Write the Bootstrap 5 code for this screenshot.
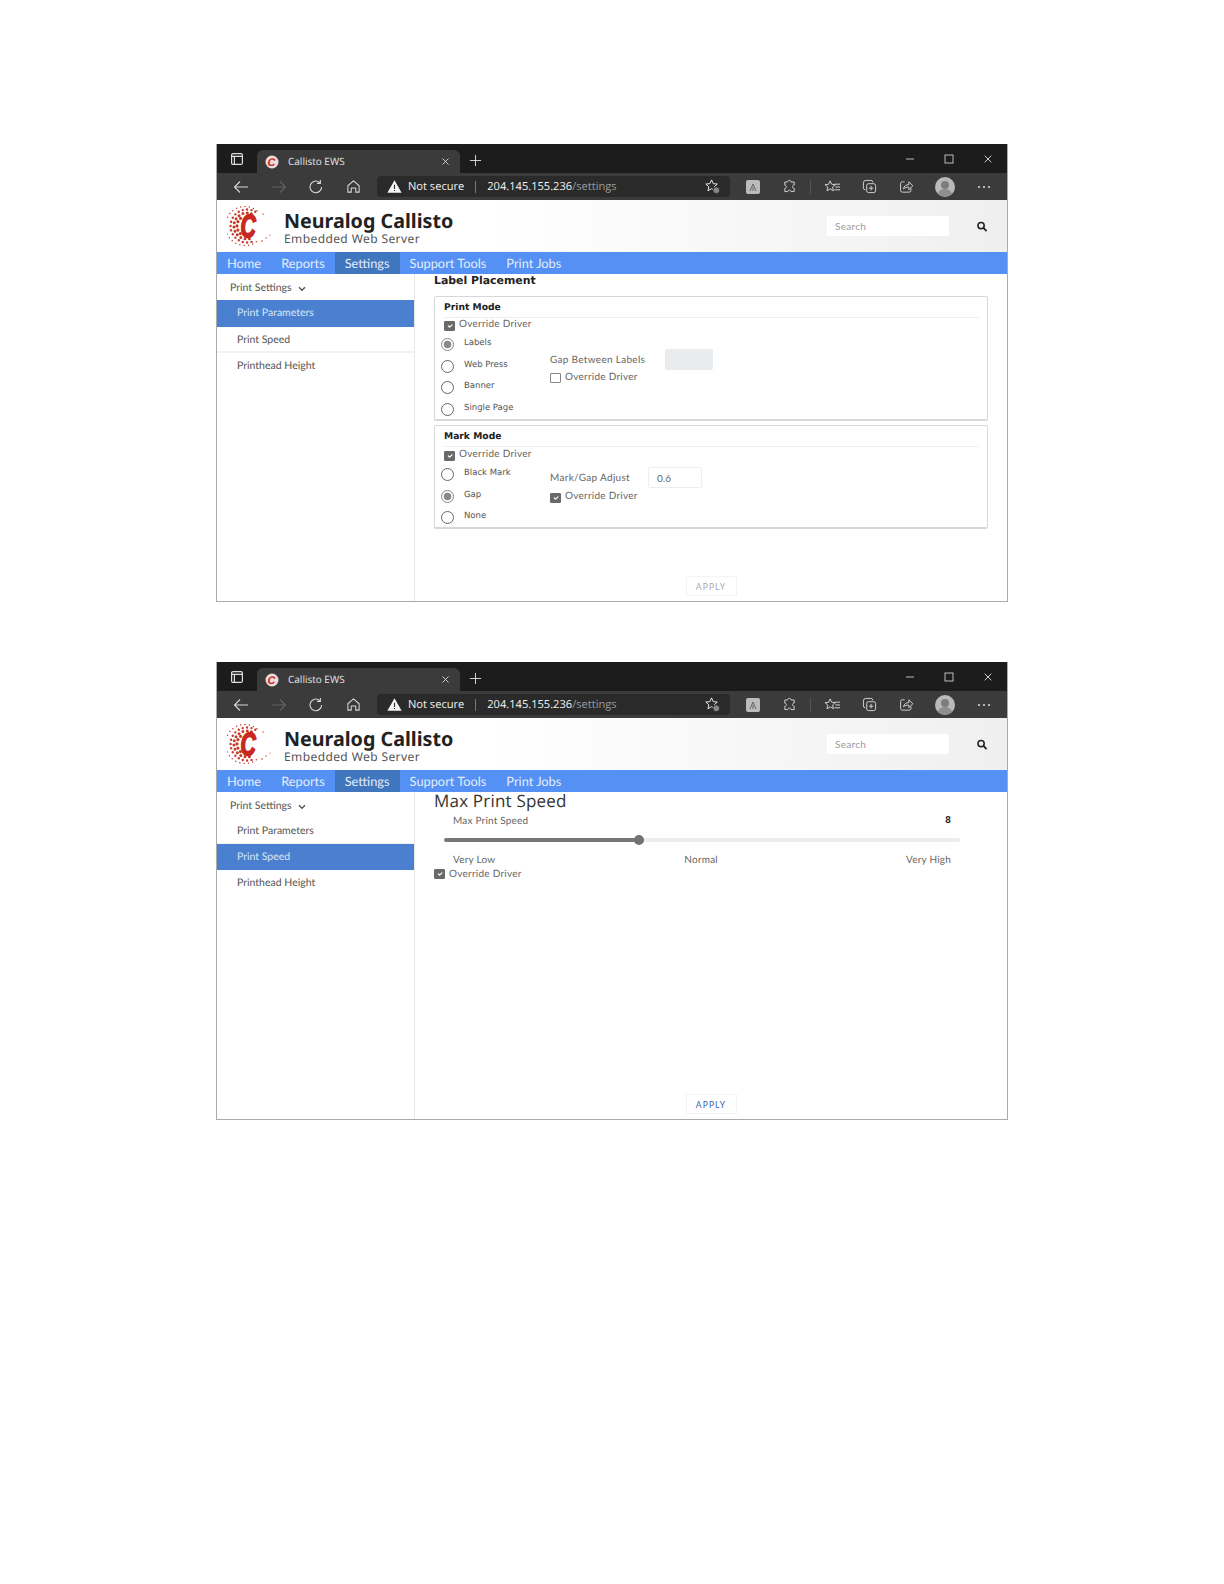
<!DOCTYPE html>
<html lang="en">
<head>
<meta charset="utf-8">
<title>Callisto EWS</title>
<link href="https://cdn.jsdelivr.net/npm/bootstrap@5.3.0/dist/css/bootstrap.min.css" rel="stylesheet">
<style>
body{background:#fff;font-family:Lato,"Open Sans",sans-serif;color:#555;text-rendering:geometricPrecision;}
.sheet{padding:144px 0 0 216px;}
.win{width:792px;height:458px;margin-bottom:60px;border:solid #aaa;border-width:0 1px 1px 1px;display:flex;flex-direction:column;overflow:hidden;}
.iconlib{width:0;height:0;display:block;}
.tabstrip{height:29px;background:#1c1c1c;color:#ddd;flex:none;}
.winicon{width:40px;margin-top:1px;}
.tabchip{width:203px;height:23px;background:#3b3b3b;border-radius:6px 6px 0 0;padding:0 10px 0 8px;font:10px "Open Sans",sans-serif;color:#e6e6e6;}
.tabchip svg.fav{margin-right:9px;}
.tabchip span{margin-top:-1px;}
.plus{width:30px;margin-top:3px;}
.wctl{width:39px;margin-top:0;}
.toolstrip{height:27px;background:#3b3b3b;flex:none;padding-left:5px;color:#d8d8d8;}
.slot{width:38px;flex:none;}
.slot-s{width:37px;flex:none;}
.slot-r{width:36px;flex:none;}
.slot-h{width:39px;flex:none;}
.addr{width:353px;height:21px;margin-left:4px;margin-right:4px;background:#2a2a2a;border-radius:4px;font:11.1px "Open Sans",sans-serif;color:#f2f2f2;padding:0 9px 0 10px;flex:none;}
.addr .warnmark{margin-right:2px;}
.addr-sep{width:1px;height:12px;background:#777;margin:0 11px 0 11px;}
.addr-dim{color:#9a9a9a;}
.tooldiv{width:1px;height:14px;background:#555;margin:0 2px 0 2px;flex:none;}
.avatar{width:40px;flex:none;}
.headband{height:52px;flex:none;background:linear-gradient(90deg,#fff 35%,#efefef 100%);padding:0 0 0 10px;}
.brand-logo{margin-right:13px;flex:none;}
.brand-name{font:700 19.7px/20px "Noto Sans","Open Sans",sans-serif;color:#222;margin-top:3px;}
.brand-sub{font:12px/13px "Noto Sans","Open Sans",sans-serif;color:#555;letter-spacing:.4px;margin-top:1px;}
.searchbox{width:122px;height:20px;border:0;border-radius:1px;background:#fff;font-size:10px;padding:0 8px;color:#777;margin-right:25px;letter-spacing:.3px;}
.searchbox::placeholder{color:#999;}
.searchgo{width:16px;margin-right:17px;color:#222;}
.bluenav{height:22px;background:#5591f5;flex:none;padding-left:0;}
.bluenav .nav-link{padding:0 10px;font-size:12.8px;line-height:22px;color:#e3edfb;}
.bluenav .nav-link.active{background:#3f76bd;color:#e3edfb;}
.appbody{flex:1 1 auto;min-height:0;}
.sidepane{width:198px;flex:none;border-right:1px solid #e6e6e6;}
.sidetop{height:26px;padding:3px 0 0 13px;font-size:10.5px;color:#555;}
.sidetop svg{margin-left:6px;}
.sidelist .list-group-item{height:26.5px;padding:0 0 0 20px;border:0;border-bottom:2px solid #f2f2f2;font-size:10.5px;line-height:27.5px;color:#555;background:transparent;}
.sidelist .list-group-item.active{background:#4a80cf;color:#dbe7f7;border-color:#4a80cf;}
.sidelist .list-group-item:last-child{border-bottom:0;}
.mainpane{flex:1 1 auto;padding:0 19px 4px 19px;min-width:0;}
.sect-title{font:700 10.9px/14px "DejaVu Sans",sans-serif;color:#222;height:22px;}
.sect-large{font:400 17px/18px "Open Sans",sans-serif;color:#333;height:19px;letter-spacing:.2px;}
.fieldbox{border:1px solid #d8d8d8;border-bottom-width:2px;border-radius:2px;padding:0 8px 0 9px;margin-bottom:4px;}
.fieldbox-a{height:125px;}
.fieldbox-b{height:104px;}
.boxhead{font:700 9.2px/22px "DejaVu Sans",sans-serif;color:#222;border-bottom:1px solid #eee;height:21px;}
.ovr{height:16px;}
.ovr-down{height:17px;padding-top:1px;}
.ovr-inner{font-size:10px;line-height:12px;color:#666;letter-spacing:.25px;gap:4px;}
.ovr-b{margin-top:2px;}
.tickbox.form-check-input{width:11px;height:10px;margin:3px 0 0 0;border-radius:1px;border-color:#888;flex:none;}
.tickbox.form-check-input:checked{background-color:#6a6a6a;border-color:#6a6a6a;}
.radcol{width:106px;flex:none;margin-top:1px;}
.radrow{height:21.5px;gap:10px;font:8.5px/16px "DejaVu Sans",sans-serif;color:#555;}
.radrow .form-check-input{width:13px;height:13px;margin:3px 0 0 -3px;border-color:#666;flex:none;}
.radrow .form-check-input:checked{background-color:#fff;border-color:#888;background-image:radial-gradient(circle,#8a8a8a 0 3.5px,#fff 4.2px);}
.sidefield-a{padding-top:15px;}
.sidefield-a .tickbox.form-check-input{margin-top:2px;}
.sidefield-b{padding-top:3px;}
.fieldline{height:21px;margin-bottom:1px;font-size:10px;color:#666;letter-spacing:.3px;}
.fieldname-a{width:115px;padding-top:2px;}
.fieldname-b{width:98px;padding-top:2px;}
.numbox{height:21px;border:1px solid #eee;border-radius:2px;font-size:10px;color:#666;padding:0 8px;background:#fff;}
.numbox-a{width:48px;background:#e9ecef;border-color:#e9ecef;}
.numbox-b{width:54px;}
.numbox:disabled{background:#e9ecef;}
.applybtn{width:51px;height:20px;border:1px solid #f4f4f4;border-radius:0;padding:0;font-size:8.5px;line-height:20px;letter-spacing:1.1px;color:#a8a8a8;background:#fff;}
.applybtn-live{color:#3b5ea8;}
.speedlabel{height:18px;padding:0 37px 0 19px;font-size:10px;line-height:20px;color:#666;letter-spacing:.2px;}
.speedval{font-weight:700;color:#222;font-family:"Liberation Sans",sans-serif;}
.speedwrap{height:20px;margin:1px 28px 0 10px;}
.speedrange{display:block;height:20px;}
.speedrange::-webkit-slider-runnable-track{height:4px;border-radius:2px;background:linear-gradient(90deg,#777 37.5%,#ececec 37.5%);}
.speedrange::-webkit-slider-thumb{width:10px;height:10px;margin-top:-3px;background:#6f7478;border-radius:50%;}
.ticks{height:18px;padding:0 37px 0 19px;font-size:10px;line-height:20px;color:#666;letter-spacing:.2px;}
.ticks-mid{margin-left:1px;}
.ovr-flat .tickbox.form-check-input{margin-top:1px;}
.logoletter{font:italic 700 32px "Liberation Sans",sans-serif;fill:#c8281e;stroke:#c8281e;stroke-width:1.8px;}
.favletter{font:italic 700 11px "Liberation Sans",sans-serif;fill:#c8281e;}
</style>
</head>
<body>
<svg class="iconlib" aria-hidden="true">
  <symbol id="logo" viewBox="0 0 44 40">
    <g fill="none" stroke="#c8392b" stroke-linecap="round" stroke-dasharray="0 4.3">
      <path d="M13.6 12.3A10 10 0 0 0 13.6 27.7" stroke-width="3.2"/>
      <path d="M24.4 7.8A13 13 0 1 0 24.4 32.2" stroke-width="3"/>
      <path d="M28.3 5.7A16.5 16.5 0 1 0 28.3 34.3" stroke-width="2.4"/>
      <path d="M30 4.7A19.5 19.5 0 1 0 30 35.3" stroke-width="1.5"/>
    </g>
    <g fill="#c8392b"><circle cx="36" cy="8" r=".7"/><circle cx="39" cy="32" r=".7"/><circle cx="35" cy="35" r=".8"/><circle cx="43" cy="29" r=".6"/></g>
  </symbol>
  <symbol id="i-win" viewBox="0 0 14 14"><g fill="none" stroke="currentColor" stroke-width="1.2"><rect x="1.6" y="1.6" width="10.8" height="10.8" rx="1.5"/><path d="M1.6 4.4h10.8M4.4 4.4v8"/></g></symbol>
  <symbol id="i-x" viewBox="0 0 12 12"><path d="M2 2l8 8M10 2l-8 8" stroke="currentColor" stroke-width="1.1" fill="none"/></symbol>
  <symbol id="i-plus" viewBox="0 0 14 14"><path d="M7 1v12M1 7h12" stroke="currentColor" stroke-width="1" fill="none"/></symbol>
  <symbol id="i-back" viewBox="0 0 16 16"><path d="M15 8H1.5M7 2.5 1.5 8 7 13.5" stroke="currentColor" stroke-width="1.1" fill="none"/></symbol>
  <symbol id="i-fwd" viewBox="0 0 16 16"><path d="M1 8h13.5M9 2.5 14.5 8 9 13.5" stroke="currentColor" stroke-width="1.1" fill="none"/></symbol>
  <symbol id="i-reload" viewBox="0 0 16 16"><path d="M13.6 8A5.8 5.8 0 1 1 11.6 3.5M12.4 1v3.4H9" stroke="currentColor" stroke-width="1.1" fill="none"/></symbol>
  <symbol id="i-home" viewBox="0 0 16 16"><path d="M2 7.2 8 2l6 5.2V14h-3.6V9.5H5.6V14H2Z" stroke="currentColor" stroke-width="1.1" stroke-linejoin="round" fill="none"/></symbol>
  <symbol id="i-warn" viewBox="0 0 16 16"><path d="M8 1.2 15.6 14.6H.4Z" fill="#f4f4f4"/><path d="M7.4 6h1.2v4.6H7.4zM7.4 11.6h1.2v1.2H7.4z" fill="#2a2a2a"/></symbol>
  <symbol id="i-starplus" viewBox="0 0 18 18"><path d="M8 2l1.8 4 4.3.4-3.2 2.9.9 4.2L8 11.3 4.2 13.5l.9-4.2L1.9 6.4l4.3-.4Z" fill="none" stroke="currentColor" stroke-width="1"/><circle cx="13" cy="13" r="3.6" fill="#888" stroke="#2a2a2a"/></symbol>
  <symbol id="i-puzzle" viewBox="0 0 16 16"><path d="M6 3.2c0-2.4 3.6-2.4 3.6 0h3.4v3.2c-2.4 0-2.4 3.6 0 3.6V13.4H9.6c0-2.2-3.4-2.2-3.4 0H3V10c2.2 0 2.2-3.4 0-3.4V3.2Z" fill="none" stroke="currentColor" stroke-width="1"/></symbol>
  <symbol id="i-fav" viewBox="0 0 18 16"><path d="M6.5 2l1.6 3.6 3.9.4-2.9 2.6.8 3.9-3.4-2-3.4 2 .8-3.9L1 6l3.9-.4Z" fill="none" stroke="currentColor" stroke-width="1"/><path d="M11.5 5.5H17M12 8.5h5M11 11.5h6" stroke="currentColor" stroke-width="1"/></symbol>
  <symbol id="i-coll" viewBox="0 0 16 16"><path d="M3.5 11.5A2 2 0 0 1 1.5 9.5V4a2.5 2.5 0 0 1 2.5-2.5h5.5a2 2 0 0 1 2 2" fill="none" stroke="currentColor" stroke-width="1"/><rect x="5" y="5" width="9.5" height="9.5" rx="2" fill="none" stroke="currentColor" stroke-width="1"/><path d="M9.7 7.4v4.8M7.3 9.8h4.8" stroke="currentColor" stroke-width="1"/></symbol>
  <symbol id="i-share" viewBox="0 0 16 16"><path d="M6 3H3.5A1.8 1.8 0 0 0 1.7 4.8v7.4A1.8 1.8 0 0 0 3.5 14h7.4a1.8 1.8 0 0 0 1.8-1.8V10" fill="none" stroke="currentColor" stroke-width="1"/><path d="M4.8 10.5C5.3 7.5 7.5 6 10.5 6V3l4.3 4.2-4.3 4.2V8.6c-2.4 0-4 .5-5.7 1.9Z" fill="none" stroke="currentColor" stroke-width="1"/></symbol>
  <symbol id="i-user" viewBox="0 0 20 20"><circle cx="10" cy="10" r="10" fill="#b9b9b9"/><circle cx="10" cy="8" r="4" fill="#7d7d7d"/><path d="M3 17c1-4 4-5 7-5s6 1 7 5a10 10 0 0 1-14 0Z" fill="#8f8f8f"/></symbol>
  <symbol id="i-search" viewBox="0 0 12 12"><circle cx="5" cy="5" r="3.4" fill="none" stroke="currentColor" stroke-width="1.7"/><path d="M7.6 7.6 11 11" stroke="currentColor" stroke-width="2"/></symbol>
  <symbol id="i-chev" viewBox="0 0 8 6"><path d="M1 1.2 4 4.2 7 1.2" fill="none" stroke="currentColor" stroke-width="1.4"/></symbol>
</svg>

<div class="sheet">

  <div class="win">
    <div class="tabstrip d-flex align-items-end">
      <div class="winicon d-flex justify-content-center align-self-center"><svg width="14" height="14"><use href="#i-win"/></svg></div>
      <div class="tabchip d-flex align-items-center">
        <svg class="fav" width="14" height="14" viewBox="0 0 14 14"><circle cx="7" cy="7" r="6.5" fill="#eedcdc"/><text class="favletter" x="6.5" y="11" text-anchor="middle">C</text></svg>
        <span class="flex-grow-1">Callisto EWS</span>
        <svg width="9" height="9"><use href="#i-x"/></svg>
      </div>
      <div class="plus d-flex justify-content-center align-self-center"><svg width="13" height="13"><use href="#i-plus"/></svg></div>
      <div class="flex-grow-1"></div>
      <div class="wctl d-flex justify-content-center align-self-center"><svg width="10" height="10"><path d="M1 5h8" stroke="#bbb"/></svg></div>
      <div class="wctl d-flex justify-content-center align-self-center"><svg width="10" height="10"><rect x="1" y="1" width="8" height="8" fill="none" stroke="#bbb"/></svg></div>
      <div class="wctl d-flex justify-content-center align-self-center"><svg width="10" height="10"><use href="#i-x"/></svg></div>
    </div>
    <div class="toolstrip d-flex align-items-center">
      <div class="slot text-center"><svg class="d-block mx-auto" width="16" height="16"><use href="#i-back"/></svg></div>
      <div class="slot text-center opacity-25"><svg class="d-block mx-auto" width="16" height="16"><use href="#i-fwd"/></svg></div>
      <div class="slot-r text-center"><svg class="d-block mx-auto" width="16" height="16"><use href="#i-reload"/></svg></div>
      <div class="slot-h text-center"><svg class="d-block mx-auto" width="15" height="15"><use href="#i-home"/></svg></div>
      <div class="addr d-flex align-items-center">
        <svg class="warnmark" width="15" height="15"><use href="#i-warn"/></svg><span class="ms-1">Not secure</span>
        <span class="addr-sep"></span><span>204.145.155.236<span class="addr-dim">/settings</span></span>
        <svg class="ms-auto" width="17" height="17"><use href="#i-starplus"/></svg>
      </div>
      <div class="slot-s text-center"><svg class="d-block mx-auto" width="14" height="14"><rect x="0" y="0" width="14" height="14" rx="2" fill="#bbb"/><path d="M4 11l3-7 3 7M7 7v4" stroke="#666" fill="none"/></svg></div>
      <div class="slot-s text-center"><svg class="d-block mx-auto" width="15" height="15"><use href="#i-puzzle"/></svg></div>
      <span class="tooldiv"></span>
      <div class="slot text-center"><svg class="d-block mx-auto" width="17" height="15"><use href="#i-fav"/></svg></div>
      <div class="slot-s text-center"><svg class="d-block mx-auto" width="15" height="15"><use href="#i-coll"/></svg></div>
      <div class="slot-s text-center"><svg class="d-block mx-auto" width="15" height="15"><use href="#i-share"/></svg></div>
      <div class="avatar text-center"><svg class="d-block mx-auto" width="20" height="20"><use href="#i-user"/></svg></div>
      <div class="slot text-center"><svg class="d-block mx-auto" width="14" height="4"><g fill="#ddd"><circle cx="2" cy="2" r="1"/><circle cx="7" cy="2" r="1"/><circle cx="12" cy="2" r="1"/></g></svg></div>
    </div>
    <header class="headband d-flex align-items-center">
      <svg class="brand-logo" width="44" height="40" viewBox="0 0 44 40"><use href="#logo" width="44" height="40"/><text class="logoletter" transform="translate(21 31) scale(.66 1)" text-anchor="middle">C</text></svg>
      <div class="flex-grow-1">
        <div class="brand-name">Neuralog Callisto</div>
        <div class="brand-sub">Embedded Web Server</div>
      </div>
      <input class="searchbox" type="text" placeholder="Search">
      <svg class="searchgo" width="11" height="11"><use href="#i-search"/></svg>
    </header>
    <ul class="bluenav nav">
      <li class="nav-item"><a class="nav-link" href="#">Home</a></li>
      <li class="nav-item"><a class="nav-link" href="#">Reports</a></li>
      <li class="nav-item"><a class="nav-link active" href="#">Settings</a></li>
      <li class="nav-item"><a class="nav-link" href="#">Support Tools</a></li>
      <li class="nav-item"><a class="nav-link" href="#">Print Jobs</a></li>
    </ul>
    <div class="appbody d-flex">
      <aside class="sidepane">
        <div class="sidetop d-flex align-items-center">Print Settings<svg width="8" height="6"><use href="#i-chev"/></svg></div>
        <div class="sidelist list-group list-group-flush">
          <a class="list-group-item active" href="#">Print Parameters</a>
          <a class="list-group-item" href="#">Print Speed</a>
          <a class="list-group-item" href="#">Printhead Height</a>
        </div>
      </aside>
      <main class="mainpane d-flex flex-column">
        <div class="sect-title">Label Placement</div>
        <section class="fieldbox fieldbox-a">
          <div class="boxhead">Print Mode</div>
          <div class="ovr"><label class="ovr-inner d-flex"><input class="tickbox form-check-input" type="checkbox" checked>Override Driver</label></div>
          <div class="d-flex">
            <div class="radcol">
              <label class="radrow d-flex"><input class="form-check-input" type="radio" name="pm1" checked>Labels</label>
              <label class="radrow d-flex"><input class="form-check-input" type="radio" name="pm1">Web Press</label>
              <label class="radrow d-flex"><input class="form-check-input" type="radio" name="pm1">Banner</label>
              <label class="radrow d-flex"><input class="form-check-input" type="radio" name="pm1">Single Page</label>
            </div>
            <div class="sidefield-a">
              <div class="fieldline d-flex align-items-center"><span class="fieldname-a">Gap Between Labels</span><input class="numbox numbox-a" type="text" disabled></div>
              <label class="ovr-inner d-flex"><input class="tickbox form-check-input" type="checkbox">Override Driver</label>
            </div>
          </div>
        </section>
        <section class="fieldbox fieldbox-b">
          <div class="boxhead">Mark Mode</div>
          <div class="ovr ovr-down"><label class="ovr-inner d-flex"><input class="tickbox form-check-input" type="checkbox" checked>Override Driver</label></div>
          <div class="d-flex">
            <div class="radcol">
              <label class="radrow d-flex"><input class="form-check-input" type="radio" name="mm1">Black Mark</label>
              <label class="radrow d-flex"><input class="form-check-input" type="radio" name="mm1" checked>Gap</label>
              <label class="radrow d-flex"><input class="form-check-input" type="radio" name="mm1">None</label>
            </div>
            <div class="sidefield-b">
              <div class="fieldline d-flex align-items-center"><span class="fieldname-b">Mark/Gap Adjust</span><input class="numbox numbox-b" type="text" value="0.6"></div>
              <label class="ovr-inner ovr-b d-flex"><input class="tickbox form-check-input" type="checkbox" checked>Override Driver</label>
            </div>
          </div>
        </section>
        <div class="mt-auto text-center"><button class="btn applybtn" type="button">APPLY</button></div>
      </main>
    </div>
  </div>

  <div class="win">
    <div class="tabstrip d-flex align-items-end">
      <div class="winicon d-flex justify-content-center align-self-center"><svg width="14" height="14"><use href="#i-win"/></svg></div>
      <div class="tabchip d-flex align-items-center">
        <svg class="fav" width="14" height="14" viewBox="0 0 14 14"><circle cx="7" cy="7" r="6.5" fill="#eedcdc"/><text class="favletter" x="6.5" y="11" text-anchor="middle">C</text></svg>
        <span class="flex-grow-1">Callisto EWS</span>
        <svg width="9" height="9"><use href="#i-x"/></svg>
      </div>
      <div class="plus d-flex justify-content-center align-self-center"><svg width="13" height="13"><use href="#i-plus"/></svg></div>
      <div class="flex-grow-1"></div>
      <div class="wctl d-flex justify-content-center align-self-center"><svg width="10" height="10"><path d="M1 5h8" stroke="#bbb"/></svg></div>
      <div class="wctl d-flex justify-content-center align-self-center"><svg width="10" height="10"><rect x="1" y="1" width="8" height="8" fill="none" stroke="#bbb"/></svg></div>
      <div class="wctl d-flex justify-content-center align-self-center"><svg width="10" height="10"><use href="#i-x"/></svg></div>
    </div>
    <div class="toolstrip d-flex align-items-center">
      <div class="slot text-center"><svg class="d-block mx-auto" width="16" height="16"><use href="#i-back"/></svg></div>
      <div class="slot text-center opacity-25"><svg class="d-block mx-auto" width="16" height="16"><use href="#i-fwd"/></svg></div>
      <div class="slot-r text-center"><svg class="d-block mx-auto" width="16" height="16"><use href="#i-reload"/></svg></div>
      <div class="slot-h text-center"><svg class="d-block mx-auto" width="15" height="15"><use href="#i-home"/></svg></div>
      <div class="addr d-flex align-items-center">
        <svg class="warnmark" width="15" height="15"><use href="#i-warn"/></svg><span class="ms-1">Not secure</span>
        <span class="addr-sep"></span><span>204.145.155.236<span class="addr-dim">/settings</span></span>
        <svg class="ms-auto" width="17" height="17"><use href="#i-starplus"/></svg>
      </div>
      <div class="slot-s text-center"><svg class="d-block mx-auto" width="14" height="14"><rect x="0" y="0" width="14" height="14" rx="2" fill="#bbb"/><path d="M4 11l3-7 3 7M7 7v4" stroke="#666" fill="none"/></svg></div>
      <div class="slot-s text-center"><svg class="d-block mx-auto" width="15" height="15"><use href="#i-puzzle"/></svg></div>
      <span class="tooldiv"></span>
      <div class="slot text-center"><svg class="d-block mx-auto" width="17" height="15"><use href="#i-fav"/></svg></div>
      <div class="slot-s text-center"><svg class="d-block mx-auto" width="15" height="15"><use href="#i-coll"/></svg></div>
      <div class="slot-s text-center"><svg class="d-block mx-auto" width="15" height="15"><use href="#i-share"/></svg></div>
      <div class="avatar text-center"><svg class="d-block mx-auto" width="20" height="20"><use href="#i-user"/></svg></div>
      <div class="slot text-center"><svg class="d-block mx-auto" width="14" height="4"><g fill="#ddd"><circle cx="2" cy="2" r="1"/><circle cx="7" cy="2" r="1"/><circle cx="12" cy="2" r="1"/></g></svg></div>
    </div>
    <header class="headband d-flex align-items-center">
      <svg class="brand-logo" width="44" height="40" viewBox="0 0 44 40"><use href="#logo" width="44" height="40"/><text class="logoletter" transform="translate(21 31) scale(.66 1)" text-anchor="middle">C</text></svg>
      <div class="flex-grow-1">
        <div class="brand-name">Neuralog Callisto</div>
        <div class="brand-sub">Embedded Web Server</div>
      </div>
      <input class="searchbox" type="text" placeholder="Search">
      <svg class="searchgo" width="11" height="11"><use href="#i-search"/></svg>
    </header>
    <ul class="bluenav nav">
      <li class="nav-item"><a class="nav-link" href="#">Home</a></li>
      <li class="nav-item"><a class="nav-link" href="#">Reports</a></li>
      <li class="nav-item"><a class="nav-link active" href="#">Settings</a></li>
      <li class="nav-item"><a class="nav-link" href="#">Support Tools</a></li>
      <li class="nav-item"><a class="nav-link" href="#">Print Jobs</a></li>
    </ul>
    <div class="appbody d-flex">
      <aside class="sidepane">
        <div class="sidetop d-flex align-items-center">Print Settings<svg width="8" height="6"><use href="#i-chev"/></svg></div>
        <div class="sidelist list-group list-group-flush">
          <a class="list-group-item" href="#">Print Parameters</a>
          <a class="list-group-item active" href="#">Print Speed</a>
          <a class="list-group-item" href="#">Printhead Height</a>
        </div>
      </aside>
      <main class="mainpane d-flex flex-column">
        <div class="sect-title sect-large">Max Print Speed</div>
        <div class="speedlabel d-flex justify-content-between"><span>Max Print Speed</span><span class="speedval">8</span></div>
        <div class="speedwrap"><input class="form-range speedrange" type="range" min="2" max="18" value="8"></div>
        <div class="ticks d-flex justify-content-between"><span>Very Low</span><span class="ticks-mid">Normal</span><span>Very High</span></div>
        <label class="ovr-inner ovr-flat d-flex"><input class="tickbox form-check-input" type="checkbox" checked>Override Driver</label>
        <div class="mt-auto text-center"><button class="btn applybtn applybtn-live" type="button">APPLY</button></div>
      </main>
    </div>
  </div>

</div>
<script src="https://cdn.jsdelivr.net/npm/bootstrap@5.3.0/dist/js/bootstrap.bundle.min.js"></script>
</body>
</html>
